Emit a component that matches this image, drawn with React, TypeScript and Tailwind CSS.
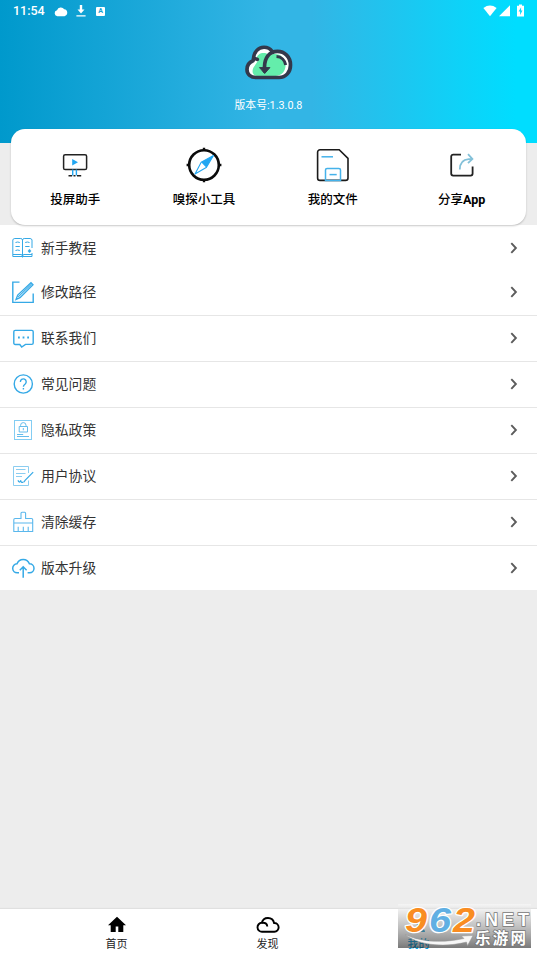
import React from "react";

type Item = {
  label: string;
  icon: React.ReactNode;
};

const BLUE = "#35a9e6";

const herramientas: Item[] = [
  {
    label: "投屏助手",
    icon: (
      <svg width="36" height="36" viewBox="0 0 36 36" fill="none">
        <rect x="6.6" y="7.7" width="23" height="14.8" rx="1.6" stroke="#222" strokeWidth="1.5" />
        <path d="M15.2 12v6.6l5.8-3.3z" fill="#22a7f2" />
        <path d="M15.7 22.5v6M19.4 22.5v6" stroke="#22a7f2" strokeWidth="1.4" />
        <path d="M11.5 28.7h3.6M16.5 28.7h2M20 28.7h4.2" stroke="#222" strokeWidth="1.5" />
      </svg>
    ),
  },
  {
    label: "嗅探小工具",
    icon: (
      <svg width="36" height="36" viewBox="0 0 36 36" fill="none">
        <circle cx="18" cy="18" r="14.8" stroke="#0b0b0b" strokeWidth="2.6" />
        <path d="M18 .8v3M18 32.2v3M.6 18h3M32.4 18h3" stroke="#0b0b0b" strokeWidth="2.4" />
        <path d="M27.5 8.5 15.2 15.2 20.2 20.6z" fill="#22a7f2" />
        <path d="M27.5 8.5 15.2 15.2 9 27l11.2-6.4z" stroke="#22a7f2" strokeWidth="1.1" strokeLinejoin="round" />
      </svg>
    ),
  },
  {
    label: "我的文件",
    icon: (
      <svg width="36" height="36" viewBox="0 0 36 36" fill="none">
        <path
          d="M5 2.8h19.2l8.8 8.6V31a2.4 2.4 0 0 1-2.4 2.4H5A2.4 2.4 0 0 1 2.6 31V5.2A2.4 2.4 0 0 1 5 2.8z"
          stroke="#1b1b1b"
          strokeWidth="1.6"
        />
        <path d="M6.5 9.8h11.5" stroke="#45b2ea" strokeWidth="1.5" />
        <path d="M10.5 33.4V23a1.6 1.6 0 0 1 1.6-1.6h11.8a1.6 1.6 0 0 1 1.6 1.6v10.4z" stroke="#45b2ea" strokeWidth="1.5" />
        <path d="M14.5 27.6h7.2" stroke="#45b2ea" strokeWidth="1.5" />
      </svg>
    ),
  },
  {
    label: "分享App",
    icon: (
      <svg width="36" height="36" viewBox="0 0 36 36" fill="none">
        <path
          d="M17 7.6H9.2a2 2 0 0 0-2 2v17a2 2 0 0 0 2 2h17.4a2 2 0 0 0 2-2v-7"
          stroke="#222"
          strokeWidth="1.8"
        />
        <path d="M15.8 22.5c0-6.5 3.2-10 9-10.4h3M24 7.2l4.4 4.8-4.4 4.2" stroke="#82c0d8" strokeWidth="1.8" />
      </svg>
    ),
  },
];

const opciones: Item[] = [
  {
    label: "新手教程",
    icon: (
      <svg width="24" height="24" viewBox="0 0 24 24" fill="none" stroke={BLUE} strokeWidth="1">
        <path d="M11.5 4v17.5M1.8 20.5V4A2 2 0 0 1 3.8 2.500h6A1.8 1.8 0 0 1 11.5 4a1.8 1.8 0 0 1 1.7-1.500h5.900A2 2 0 0 1 21 4v8M21 17v3.500M1.8 20.500h19.200M2 18.500h8q1.500 0 1.500 2 0-2 1.500-2h8" />
        <path d="M4.5 6.500q2.200-1 4.300 0M4.500 10.500h4.300M4.500 14.500q2.200-1 4.300 0M14.200 6.500q2.200-1 4.300 0M14.200 10.500h4.300" />
        <path d="M16.900 15h3.200M18.500 13.300v3.400" strokeWidth="1.4" />
      </svg>
    ),
  },
  {
    label: "修改路径",
    icon: (
      <svg width="24" height="24" viewBox="0 0 24 24" fill="none" stroke={BLUE} strokeWidth="1.4">
        <path d="M8.5 2.1H1.8v20.3h20.4v-9" />
        <path d="m5 19.400 1.700-4.300L20 2.700l2 2L9 17.600z" strokeWidth="1.3" />
        <path d="M7.200 16.900 20.500 4.200" strokeWidth="1.1" />
      </svg>
    ),
  },
  {
    label: "联系我们",
    icon: (
      <svg width="24" height="24" viewBox="0 0 24 24" fill="none" stroke={BLUE} strokeWidth="1.4">
        <path d="M8.8 18.500H4.200A1.4 1.4 0 0 1 2.800 17V5.800a1.4 1.4 0 0 1 1.4-1.4h16.600a1.4 1.4 0 0 1 1.400 1.400V17a1.4 1.4 0 0 1-1.400 1.400h-6.300L10.700 21z" />
        <path d="M7 11.500h1.800M11.600 11.500h1.800M16.200 11.500H18" strokeWidth="1.8" />
      </svg>
    ),
  },
  {
    label: "常见问题",
    icon: (
      <svg width="24" height="24" viewBox="0 0 24 24" fill="none" stroke={BLUE} strokeWidth="1.4">
        <circle cx="12.3" cy="12" r="9.100" />
        <path d="M9.400 9.900a2.900 2.900 0 1 1 4.800 2.100c-1.100.9-1.800 1.300-1.800 2.800" />
        <path d="M12.400 16v1.500" />
      </svg>
    ),
  },
  {
    label: "隐私政策",
    icon: (
      <svg width="24" height="24" viewBox="0 0 24 24" fill="none" stroke="#65bceb" strokeWidth="1">
        <rect x="3.5" y="2.5" width="17" height="19" stroke="#83cdf3" />
        <path d="M8.200 8.500h8.300v5.500H8.200zM9.600 8.500V7.300a2.700 2.700 0 0 1 5.400 0v1.200M12.300 10v2.300" />
        <path d="M6 16.500h6.200M6 18.500h12" />
      </svg>
    ),
  },
  {
    label: "用户协议",
    icon: (
      <svg width="24" height="24" viewBox="0 0 24 24" fill="none" stroke="#8bcdf0" strokeWidth="1">
        <path d="M17.500 9V2.500h-15v19h15v-5" />
        <path d="M5 5.500h9.500M5 9.500h9.500M5 12.500h6" />
        <path d="M22.200 8.200 14.300 16.200l-1.500 2M7 16.300q1 2.400 1.900 1.600.8-2 1.100-.6.2 1.700 2.400.9" stroke={BLUE} strokeWidth="1.2" />
      </svg>
    ),
  },
  {
    label: "清除缓存",
    icon: (
      <svg width="24" height="24" viewBox="0 0 24 24" fill="none" stroke="#5bb8ed" strokeWidth="1.1">
        <path d="M10 8.500V3.300q0-1 1-1h2.600q1 0 1 1v5.200h5.900q1.200 0 1.200 1.200v11.800H2.800V9.700q0-1.200 1.200-1.200zM2.800 13h18.700" />
        <path d="M7.200 16.800v4.400M12.300 16.800v4.400M17.200 16.800v4.400" />
      </svg>
    ),
  },
  {
    label: "版本升级",
    icon: (
      <svg width="24" height="24" viewBox="0 0 24 24" fill="none" stroke={BLUE} strokeWidth="1.500">
        <path d="M8 16.800H6.400a4.500 4.500 0 0 1-.4-9 6.600 6.600 0 0 1 12.400 0 4.500 4.500 0 0 1 .2 9h-2" />
        <path d="M12.200 21.800V10.800M8.800 14.200l3.400-3.400 3.400 3.400" />
      </svg>
    ),
  },
];

const StatusBar: React.FC = () => (
  <div className="flex h-[22px] w-full items-center justify-between pl-[13px] pr-[13px] text-white">
    <div className="flex items-center">
      <span className="w-[41px] pt-px font-['Roboto'] text-[12.5px] font-medium leading-none">11:54</span>
      <svg width="14" height="11" viewBox="0 0 13 10" fill="#fff">
        <path d="M3 9.300a2.800 2.800 0 0 1-.2-5.500A3.800 3.800 0 0 1 9.500 3a3.200 3.200 0 0 1 .3 6.300z" />
      </svg>
      <svg className="ml-2" width="10" height="12" viewBox="0 0 10 12" fill="#fff">
        <path d="M3.800 0h2.400v4.500H8.500L5 8.400 1.500 4.500h2.300zM.4 10.300h9.200v1.300H.4z" />
      </svg>
      <span className="ml-[10px] flex h-[9px] w-[9px] items-center justify-center rounded-[1px] bg-white font-['Roboto'] text-[7px] font-bold leading-none text-[#159fd2]">
        A
      </span>
    </div>
    <div className="flex items-center pb-px">
      <svg width="14" height="12" viewBox="0 0 14 12" fill="#fff">
        <path d="M.4 2.900Q7-2 13.600 2.900L7 11.200z" />
      </svg>
      <svg className="ml-[2px]" width="11" height="12" viewBox="0 0 11 12" fill="#fff">
        <path d="M11 .3v11H0z" />
      </svg>
      <svg className="ml-[7px]" width="7" height="13" viewBox="0 0 7 13" fill="#fff">
        <path fillRule="evenodd" d="M2 .6h3v1.200h2v10.600H0V1.800h2zM4.100 3.200 1.600 7.400h1.500V11L5.500 6.500H4.100z" />
      </svg>
    </div>
  </div>
);

const CloudLogo: React.FC = () => (
  <svg width="48" height="36" viewBox="0 0 48 36" fill="none">
    <path
      d="M11 32.500C6 32.500 2 29.500 2 24.500 2 20 4.500 17 8 15.500c0-8 5-13 11-13 3.500 0 6.500 1.500 8.500 4.200 9-2 18 4.300 18 13.300 0 7-4.500 12.500-11.500 12.500z"
      fill="#fff"
    />
    <path
      d="M13 31C7.500 31 6.500 26.500 8.500 22.500l4.300-6.500C10 11.500 14 8 18.500 8c2 0 4 .5 6 2.500 8-4.500 17 2 16 11-.7 6-5 9.500-10 9.500z"
      fill="#64edab"
    />
    <path
      d="M12.300 14.300C10.200 13.200 8.200 13.800 8 15.800 4.500 17.200 2 20 2 24.500c0 5 4 8 9 8h23c7 0 11.500-5.500 11.500-12.500 0-8-6-13.700-13-13.700-8.500 0-13 6.700-13 15.700v4"
      stroke="#34384b"
      strokeWidth="3.700"
      strokeLinecap="round"
      strokeLinejoin="round"
    />
    <path d="M8.300 14.300C8.800 7 13 2.300 19 2.300c3.500 0 6.500 1.700 8.300 4.200" stroke="#34384b" strokeWidth="3.500" />
    <path d="M14.500 22.600h10.400l-5.200 5.900z" fill="#34384b" stroke="#34384b" strokeLinejoin="round" />
    <path d="M31.500 11.500c4.800.2 8.400 3.600 9.200 8.500" stroke="#34384b" strokeWidth="3" />
  </svg>
);

const Chevron: React.FC = () => (
  <svg width="8" height="12" viewBox="0 0 8 12" fill="none">
    <path d="m1.300 1.200 4.600 4.800-4.600 4.800" stroke="#5c5c5c" strokeWidth="1.900" />
  </svg>
);

const SiteBadge: React.FC = () => (
  <div className="absolute bottom-[6px] right-[6px] h-11 w-[133px]">
    <svg className="overflow-visible" width="133" height="44" viewBox="0 0 133 44">
      <defs>
        <linearGradient id="badgeBg" x1="0" y1="0" x2="0" y2="1">
          <stop offset="0" stopColor="#fff" stopOpacity="0.45" />
          <stop offset="0.45" stopColor="#858585" stopOpacity="0.45" />
          <stop offset="1" stopColor="#181818" stopOpacity="0.58" />
        </linearGradient>
      </defs>
      <rect width="133" height="44" fill="url(#badgeBg)" />
      <path
        d="M7 30.500C20 37 41 40 66 34.500L63.500 32 75 31.500 69.500 41.500 68.500 38C43 44.500 19 40 7 30.500z"
        fill="#f7f7f7"
        stroke="#999"
        strokeWidth=".5"
      />
      <g
        fontFamily="Liberation Sans, sans-serif"
        fontSize="35"
        fontWeight="bold"
        fontStyle="italic"
        stroke="#fff"
        strokeWidth="2.500"
        paintOrder="stroke"
        strokeLinejoin="round"
      >
        <text x="7" y="28" textLength="22" lengthAdjust="spacingAndGlyphs" fill="#f98d22">9</text>
        <text x="31" y="28" textLength="22" lengthAdjust="spacingAndGlyphs" fill="#60afe3">6</text>
        <text x="55" y="28" textLength="22" lengthAdjust="spacingAndGlyphs" fill="#f98d22">2</text>
      </g>
      <g fill="#fff" stroke="#777" strokeWidth="1.500" paintOrder="stroke" fontWeight="bold">
        <text x="78" y="21.500" fontFamily="Liberation Sans, sans-serif" fontSize="18" textLength="53">.NET</text>
        <text x="77" y="40" fontFamily="Noto Sans CJK SC, sans-serif" fontSize="15.500" textLength="51">乐游网</text>
      </g>
    </svg>
  </div>
);

const App: React.FC = () => {
  return (
    <div className="relative flex h-[954px] w-[537px] flex-col overflow-hidden bg-[#ededed] font-['Roboto','Noto_Sans_CJK_SC',sans-serif]">
      <header className="flex h-[143px] shrink-0 flex-col items-center bg-[linear-gradient(90deg,#0099cc_0%,#33b5e5_50%,#33b5e5_58%,#00ddff_96%)]">
        <StatusBar />
        <div className="mt-[23px]">
          <CloudLogo />
        </div>
        <p className="mt-[16px] text-[10.8px] leading-[18px] text-white">版本号:1.3.0.8</p>
      </header>

      <section className="relative z-10 mx-[11px] -mt-[14px] grid h-24 shrink-0 grid-cols-4 rounded-[14px] bg-white shadow-[0_1px_2px_rgba(0,0,0,0.22)]">
        {herramientas.map((item) => (
          <div key={item.label} className="flex flex-col items-center pt-[18px]">
            {item.icon}
            <span className="mt-[8px] font-['Roboto','Noto_Sans_CJK_SC',sans-serif] text-[12.5px] font-medium leading-[18px] text-black">
              {item.label.replace("App", "")}
              {item.label.endsWith("App") && <b className="font-bold">App</b>}
            </span>
          </div>
        ))}
      </section>

      <ul className="shrink-0 bg-white">
        {opciones.map((item, i) => (
          <li
            key={item.label}
            className={
              i === 0
                ? "flex h-[45px] items-center pl-[11px] pr-[19px]"
                : i === opciones.length - 1
                  ? "flex h-11 items-center pl-[11px] pr-[19px]"
                  : "flex h-[46px] items-center border-b border-[#e6e6e6] pb-px pl-[11px] pr-[19px]"
            }
          >
            {item.icon}
            <span className="ml-[6px] flex-1 text-[13.8px] leading-5 text-[#333]">{item.label}</span>
            <Chevron />
          </li>
        ))}
      </ul>

      <nav className="mt-auto flex h-[45px] shrink-0 items-start justify-center bg-white pr-[2px] shadow-[0_-1px_1px_rgba(0,0,0,0.05)]">
        <div className="flex w-[151px] flex-col items-center pt-[7px]">
          <svg width="20" height="18" viewBox="0 0 20 18">
            <path d="M10 .8 19 9.300h-2.700V16h-5v-5.500H8.700V16h-5V9.300H1z" fill="#000" />
          </svg>
          <span className="mt-[2px] text-[11px] leading-[18px] text-[#222]">首页</span>
        </div>
        <div className="flex w-[151px] flex-col items-center pt-[7px]">
          <svg width="24" height="18" viewBox="0 0 24 18" fill="none" stroke="#000" strokeWidth="1.900">
            <path d="M6.200 15.800a4.500 4.500 0 0 1-.4-9 6.300 6.300 0 0 1 12.300.2 4.400 4.400 0 0 1 .3 8.800z" />
            <path d="M5.800 6.800c3.300-.5 5.300.8 5.500 3.700" />
          </svg>
          <span className="mt-[2px] text-[11px] leading-[18px] text-[#222]">发现</span>
        </div>
        <div className="flex w-[151px] flex-col items-center pt-[7px]">
          <svg width="20" height="18" viewBox="0 0 20 18" fill="#0f9bd0">
            <path d="M10 3a3 3 0 1 1 0 6 3 3 0 0 1 0-6zM4 16q0-4 6-5 6 1 6 5z" />
          </svg>
          <span className="mt-[2px] text-[11px] font-medium leading-[18px] text-[#00a3e8]">我的</span>
        </div>
      </nav>

      <SiteBadge />
    </div>
  );
};

export default App;
